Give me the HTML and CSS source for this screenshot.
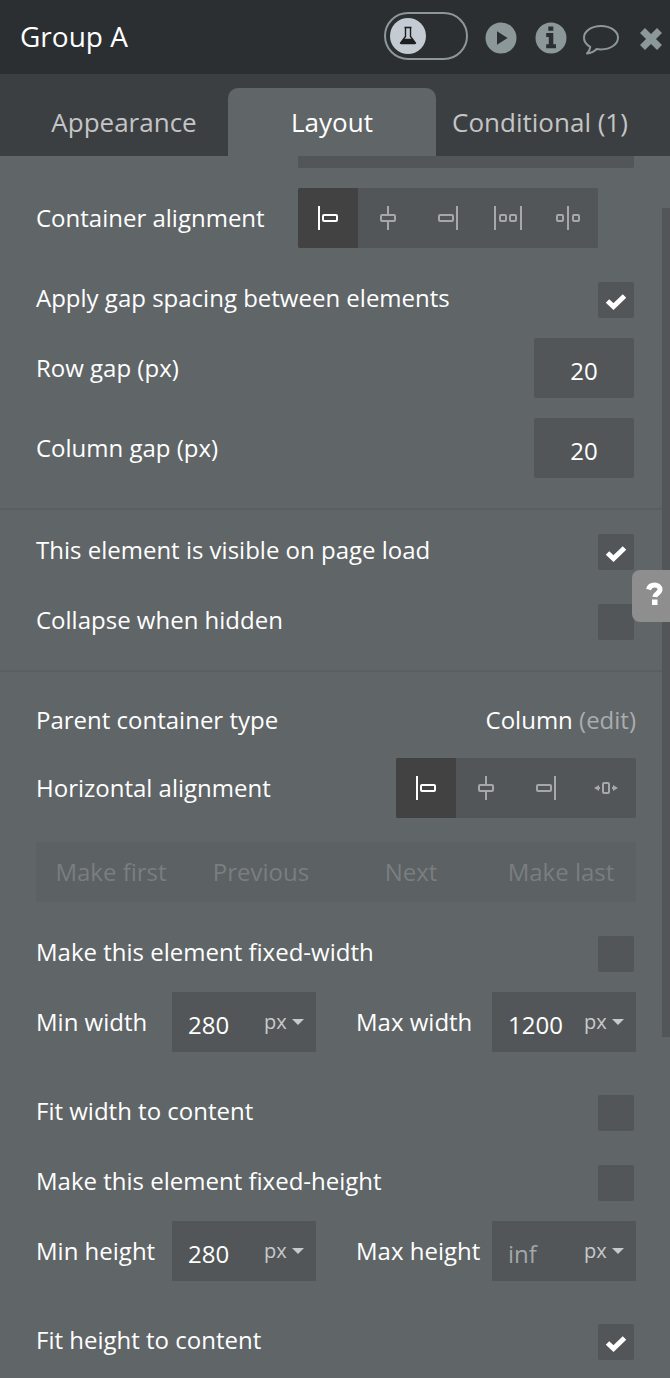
FILE: index.html
```html
<!DOCTYPE html>
<html lang="en">
<head>
<meta charset="utf-8">
<meta name="viewport" content="width=device-width, initial-scale=1">
<title>Group A</title>
<link rel="stylesheet" href="styles.css">
</head>
<body>
<svg class="sprite" aria-hidden="true">
  <symbol id="i-start" viewBox="0 0 32 32"><path d="M7 4v24"/><rect x="11" y="13" width="14" height="6" rx="1"/></symbol>
  <symbol id="i-center" viewBox="0 0 32 32"><path d="M16 4v9M16 19v9"/><rect x="9" y="13" width="14" height="6" rx="1"/></symbol>
  <symbol id="i-end" viewBox="0 0 32 32"><path d="M25 4v24"/><rect x="7" y="13" width="14" height="6" rx="1"/></symbol>
  <symbol id="i-between" viewBox="0 0 32 32"><path d="M3 4v24M29 4v24"/><rect x="8" y="13" width="6" height="6" rx="1"/><rect x="18" y="13" width="6" height="6" rx="1"/></symbol>
  <symbol id="i-around" viewBox="0 0 32 32"><path d="M16 4v24"/><rect x="5" y="13" width="6" height="6" rx="1"/><rect x="21" y="13" width="6" height="6" rx="1"/></symbol>
  <symbol id="i-stretch" viewBox="0 0 32 32"><rect x="13" y="11" width="6" height="10" rx="1"/><path d="M6 16h4M22 16h4"/><path class="solid" d="M4 16l5-3v6zM28 16l-5-3v6z"/></symbol>
</svg>

<div class="panel">
  <header class="header">
    <h1 class="title">Group A</h1>
    <div class="actions">
      <label class="toggle">
        <input type="checkbox" role="switch" aria-label="Experimental features">
        <svg class="knob" viewBox="0 0 36 36" aria-hidden="true">
          <circle cx="18" cy="18" r="18" fill="#c5cbd2"/>
          <path d="M15.5 10v8.500L11 24.500h14L20.500 18.500V10" fill="none" stroke="#1c1f21" stroke-width="1.400"/>
          <path d="M14.500 9.500h7" stroke="#1c1f21" stroke-width="1.600"/>
          <path d="M13.400 20.800h9.200l3.100 3.900q.8 1.500-1 1.500H11.300q-1.800 0-1-1.500z" fill="#1c1f21"/>
        </svg>
      </label>
      <button class="icon-button" type="button" aria-label="Preview">
        <svg viewBox="0 0 38 38"><circle cx="19" cy="21" r="15.500"/><path class="cut" d="M15 14.200v13.600L25.600 21z" stroke-width="2" stroke-linejoin="round"/></svg>
      </button>
      <button class="icon-button" type="button" aria-label="Info">
        <svg viewBox="0 0 38 38"><circle cx="19" cy="21" r="15.500"/><path class="cut" d="M16.300 9.500h5v4.300h-5zM14.200 16h7.100v11.200h2.700v4H14.200v-4h2.600v-7.200h-2.600z"/></svg>
      </button>
      <button class="icon-button" type="button" aria-label="Comments">
        <svg viewBox="0 0 38 38"><path class="line" d="M19 9C9.500 9 2 14.200 2 20.700c0 3.800 2.500 7.100 6.300 9.200-.3 2.700-1.300 4.600-3.300 6.600 4.200-.4 7.300-2.200 9.600-4.500 1.400.3 2.900.4 4.400.4 9.500 0 17-5.200 17-11.700S28.500 9 19 9z"/></svg>
      </button>
      <button class="icon-button" type="button" aria-label="Close">
        <svg viewBox="0 0 38 38"><path class="cross" d="M10.500 13.500l17 17M27.500 13.500l-17 17"/></svg>
      </button>
    </div>
  </header>

  <nav class="tabs" role="tablist">
    <button class="tab" type="button" role="tab" aria-selected="false">Appearance</button>
    <button class="tab" type="button" role="tab" aria-selected="true">Layout</button>
    <button class="tab" type="button" role="tab" aria-selected="false">Conditional (1)</button>
  </nav>

  <main class="body">
    <div class="content">
      <section class="section">
        <div class="row scrolled"><select class="layout-select" aria-label="Container layout"></select></div>
        <div class="row start">
          <span class="label label-wide">Container alignment</span>
          <div class="segments" role="group" aria-label="Container alignment">
            <button class="segment" type="button" aria-pressed="true" aria-label="Start"><svg><use href="#i-start"/></svg></button>
            <button class="segment" type="button" aria-label="Center"><svg><use href="#i-center"/></svg></button>
            <button class="segment" type="button" aria-label="End"><svg><use href="#i-end"/></svg></button>
            <button class="segment" type="button" aria-label="Space between"><svg><use href="#i-between"/></svg></button>
            <button class="segment" type="button" aria-label="Space around"><svg><use href="#i-around"/></svg></button>
          </div>
        </div>
        <div class="row check-row">
          <label for="gap">Apply gap spacing between elements</label>
          <span class="check"><input id="gap" type="checkbox" checked><svg viewBox="0 0 36 36"><path d="M9.500 19l6 5.500L26.500 14"/></svg></span>
        </div>
        <div class="row number-row">
          <label for="row-gap">Row gap (px)</label>
          <input class="number" id="row-gap" type="text" value="20">
        </div>
        <div class="row number-row">
          <label for="column-gap">Column gap (px)</label>
          <input class="number" id="column-gap" type="text" value="20">
        </div>
      </section>

      <section class="section">
        <div class="row check-row">
          <label for="visible">This element is visible on page load</label>
          <span class="check"><input id="visible" type="checkbox" checked><svg viewBox="0 0 36 36"><path d="M9.500 19l6 5.500L26.500 14"/></svg></span>
        </div>
        <div class="row check-row">
          <label for="collapse">Collapse when hidden</label>
          <span class="check"><input id="collapse" type="checkbox"></span>
        </div>
      </section>

      <section class="section">
        <div class="row parent-row">
          <span>Parent container type</span>
          <span>Column <a class="edit" href="#">(edit)</a></span>
        </div>
        <div class="row">
          <span>Horizontal alignment</span>
          <div class="segments" role="group" aria-label="Horizontal alignment">
            <button class="segment" type="button" aria-pressed="true" aria-label="Left"><svg><use href="#i-start"/></svg></button>
            <button class="segment" type="button" aria-label="Center"><svg><use href="#i-center"/></svg></button>
            <button class="segment" type="button" aria-label="Right"><svg><use href="#i-end"/></svg></button>
            <button class="segment" type="button" aria-label="Stretch"><svg><use href="#i-stretch"/></svg></button>
          </div>
        </div>
        <div class="order">
          <button type="button" disabled>Make first</button>
          <button type="button" disabled>Previous</button>
          <button type="button" disabled>Next</button>
          <button type="button" disabled>Make last</button>
        </div>
        <div class="row check-row">
          <label for="fixed-width">Make this element fixed-width</label>
          <span class="check"><input id="fixed-width" type="checkbox"></span>
        </div>
        <div class="pair">
          <div class="size">
            <label for="min-width">Min width</label>
            <div class="size-field">
              <input id="min-width" type="text" value="280">
              <span class="unit"><select aria-label="Min width unit"><option>px</option><option>%</option></select><svg viewBox="0 0 12 6"><path d="M0 0h12L6 6z"/></svg></span>
            </div>
          </div>
          <div class="size">
            <label for="max-width">Max width</label>
            <div class="size-field">
              <input id="max-width" type="text" value="1200">
              <span class="unit"><select aria-label="Max width unit"><option>px</option><option>%</option></select><svg viewBox="0 0 12 6"><path d="M0 0h12L6 6z"/></svg></span>
            </div>
          </div>
        </div>
        <div class="row check-row">
          <label for="fit-width">Fit width to content</label>
          <span class="check"><input id="fit-width" type="checkbox"></span>
        </div>
        <div class="row check-row">
          <label for="fixed-height">Make this element fixed-height</label>
          <span class="check"><input id="fixed-height" type="checkbox"></span>
        </div>
        <div class="pair">
          <div class="size">
            <label for="min-height">Min height</label>
            <div class="size-field">
              <input id="min-height" type="text" value="280">
              <span class="unit"><select aria-label="Min height unit"><option>px</option><option>%</option></select><svg viewBox="0 0 12 6"><path d="M0 0h12L6 6z"/></svg></span>
            </div>
          </div>
          <div class="size">
            <label for="max-height">Max height</label>
            <div class="size-field">
              <input id="max-height" type="text" placeholder="inf">
              <span class="unit"><select aria-label="Max height unit"><option>px</option><option>%</option></select><svg viewBox="0 0 12 6"><path d="M0 0h12L6 6z"/></svg></span>
            </div>
          </div>
        </div>
        <div class="row check-row">
          <label for="fit-height">Fit height to content</label>
          <span class="check"><input id="fit-height" type="checkbox" checked><svg viewBox="0 0 36 36"><path d="M9.500 19l6 5.500L26.500 14"/></svg></span>
        </div>
      </section>
    </div>
    <div class="scrollbar" aria-hidden="true"><div class="thumb"></div></div>
    <button class="help" type="button" aria-label="Help">
      <svg viewBox="0 0 20 24"><path d="M3.500 7.500C4.500 4 7 3 9.500 3c3 0 5.500 1.800 5.500 4.600 0 3.900-5 3.700-5.200 7.400" fill="none" stroke="#fff" stroke-width="5"/><path d="M7 17.500h5.500V23H7z" fill="#fff"/></svg>
    </button>
  </main>
</div>
</body>
</html>
```

FILE: styles.css
```css
:root {
  --header: #2b2f32;
  --tabs: #3c3f41;
  --surface: #606567;
  --field: #525658;
  --divider: #5a5f61;
  --icon: #8c9799;
  --muted: #a5a7a8;
}

* {
  box-sizing: border-box;
}

body {
  margin: 0;
  background: var(--surface);
  color: #fff;
  font: 24px/36px "Open Sans", "Noto Sans", sans-serif;
}

button,
input,
select {
  margin: 0;
  padding: 0;
  border: 0;
  border-radius: 0;
  background: none;
  color: inherit;
  font: inherit;
  appearance: none;
}

.sprite {
  display: none;
}

.panel {
  display: flex;
  flex-direction: column;
  min-height: 100vh;
}

.header {
  display: flex;
  align-items: center;
  justify-content: space-between;
  padding: 12px 0 14px 20px;
  background: var(--header);
}

.title {
  margin: 0;
  font-size: 28px;
  font-weight: 400;
}

.actions {
  display: flex;
  align-items: center;
  gap: 12px;
}

.toggle {
  display: grid;
  align-items: center;
  width: 84px;
  height: 48px;
  margin-right: 2px;
}

.toggle input {
  grid-area: 1 / 1;
  width: 100%;
  height: 100%;
  border: 2px solid var(--icon);
  border-radius: 24px;
}

.knob {
  grid-area: 1 / 1;
  width: 36px;
  height: 36px;
  margin-left: 6px;
}

.icon-button svg {
  display: block;
  width: 38px;
  height: 38px;
  fill: var(--icon);
}

.icon-button .cut {
  fill: var(--header);
  stroke: var(--header);
  stroke-width: 0;
}

.icon-button .line {
  fill: none;
  stroke: var(--icon);
  stroke-width: 2;
  stroke-linejoin: round;
}

.icon-button .cross {
  stroke: var(--icon);
  stroke-width: 7;
}

.tabs {
  display: flex;
  padding: 14px 26px 0 20px;
  background: var(--tabs);
}

.tab {
  flex: 1;
  height: 68px;
  border-radius: 10px 10px 0 0;
  color: #c4c5c6;
  font-size: 26px;
  white-space: nowrap;
}

.tab[aria-selected="true"] {
  background: var(--surface);
  color: #fff;
}

.body {
  position: relative;
  display: flex;
  flex: 1;
  overflow: hidden;
}

.content {
  flex: 1;
}

.section {
  display: flex;
  flex-direction: column;
  gap: 20px;
  padding: 10px 26px 30px 36px;
  border-bottom: 2px solid var(--divider);
}

.section:first-child {
  padding-top: 0;
}

.section:last-child {
  padding-bottom: 18px;
  border-bottom: 0;
}

.row {
  display: flex;
  align-items: center;
  justify-content: space-between;
}

.scrolled {
  margin-top: -48px;
  padding: 0 2px 0 262px;
}

.layout-select {
  width: 100%;
  height: 60px;
  border-radius: 2px;
  background: var(--field);
}

.start {
  justify-content: flex-start;
}

.label-wide {
  width: 262px;
}

.check-row {
  padding: 14px 2px 0 0;
}

.check-row label {
  margin: -2px 0 2px;
}

.number-row {
  padding-right: 2px;
}

.parent-row {
  padding-top: 20px;
}

.segments {
  display: flex;
  border-radius: 2px;
  background: var(--field);
  overflow: hidden;
}

.segment {
  display: grid;
  place-items: center;
  width: 60px;
  height: 60px;
  color: var(--muted);
}

.segment[aria-pressed="true"] {
  background: #424242;
  color: #fff;
}

.segment svg {
  width: 32px;
  height: 32px;
  fill: none;
  stroke: currentColor;
  stroke-width: 2;
}

.solid {
  fill: currentColor;
  stroke: none;
}

.check {
  display: grid;
  width: 36px;
  height: 36px;
}

.check input {
  grid-area: 1 / 1;
  border-radius: 2px;
  background: var(--field);
}

.check svg {
  grid-area: 1 / 1;
  fill: none;
  stroke: #fff;
  stroke-width: 5;
  pointer-events: none;
}

.number {
  width: 100px;
  height: 60px;
  padding-top: 4px;
  border-radius: 2px;
  background: var(--field);
  text-align: center;
}

.edit {
  color: #a9adaf;
  text-decoration: none;
}

.order {
  display: grid;
  grid-template-columns: repeat(4, 1fr);
  height: 60px;
  margin-top: 4px;
  border-radius: 4px;
  background: #5c6163;
  color: #7a7e80;
}

.pair {
  display: grid;
  grid-template-columns: 1fr 1fr;
  gap: 40px;
  margin-bottom: 9px;
}

.size {
  display: flex;
  align-items: center;
  justify-content: space-between;
  white-space: nowrap;
}

.size-field {
  display: flex;
  align-items: center;
  width: 144px;
  height: 60px;
  padding: 0 12px 0 16px;
  background: var(--field);
}

.size-field input {
  flex: 1;
  min-width: 0;
  height: 60px;
  padding-top: 4px;
}

.size-field input::placeholder {
  color: var(--muted);
  opacity: 1;
}

.unit {
  display: grid;
  align-items: center;
  width: 40px;
  color: #c8c9ca;
  font-size: 20px;
}

.unit select {
  grid-area: 1 / 1;
  width: 100%;
}

.unit svg {
  grid-area: 1 / 1;
  justify-self: end;
  width: 12px;
  height: 6px;
  fill: currentColor;
  pointer-events: none;
}

.scrollbar {
  width: 8px;
  padding-top: 52px;
}

.thumb {
  height: 829px;
  background: var(--field);
}

.help {
  position: absolute;
  top: 414px;
  right: 0;
  display: grid;
  place-items: center;
  width: 38px;
  height: 52px;
  padding: 0 0 4px 8px;
  border-radius: 8px 0 0 8px;
  background: #8e8e8e;
}

.help svg {
  width: 20px;
  height: 24px;
}
```
